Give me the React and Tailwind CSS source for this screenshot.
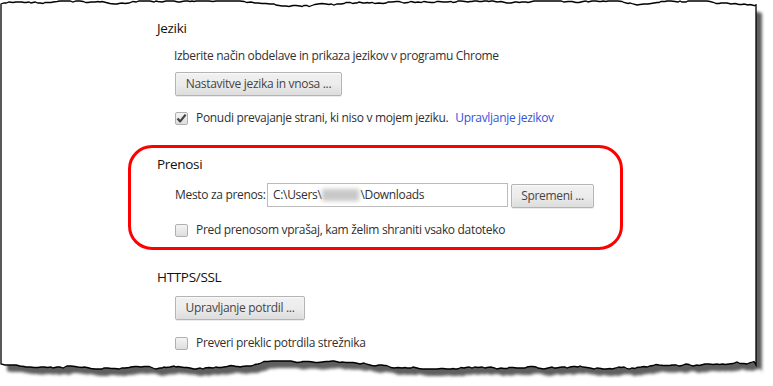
import React from "react";

// deterministic jitter for the torn paper edge
const makeRand = (seed) => {
    let s = seed;
    return () => {
        s = (s * 9301 + 49297) % 233280;
        return s / 233280;
    };
};

const edge = (x0, x1, base, amp, seed) => {
    const rand = makeRand(seed);
    const pts = [];
    let y = base;
    for (let x = x0; x <= x1; x += 2 + Math.floor(rand() * 3)) {
        y += (rand() - 0.5) * 2.2;
        if (y > base + amp) y = base + amp;
        if (y < base - amp) y = base - amp;
        pts.push([x, Math.round(y * 2) / 2]);
    }
    pts.push([x1, base]);
    return pts;
};

const TornPaper = () => {
    const top = edge(1, 756, 4, 3, 7);
    const bottom = edge(1, 756, 365, 4, 23).reverse();
    const d =
        "M" + top.map(([x, y]) => `${x},${y}`).join(" L") +
        " L" + bottom.map(([x, y]) => `${x},${y}`).join(" L") + " Z";
    return (
        <svg className="absolute inset-0" width="773" height="386">
            <defs>
                <filter id="soft" x="-5%" y="-5%" width="110%" height="110%">
                    <feGaussianBlur stdDeviation="1.6" />
                </filter>
            </defs>
            <path d={d} transform="translate(6,7)" fill="#5f5f5f" filter="url(#soft)" />
            <path d={d} fill="#fff" stroke="#000" strokeWidth="1.3" />
        </svg>
    );
};

const Button = ({ children, w }) => (
    <button
        className={`h-[24px] ${w} rounded-[2px] border border-[#b4b4b4] bg-gradient-to-b from-[#f0f0f0] via-[#ececec] to-[#dcdcdc] text-[12px] text-[#444] shadow-[0_1px_0_rgba(0,0,0,0.08),inset_0_1px_2px_rgba(255,255,255,0.75)]`}
    >
        {children}
    </button>
);

const Checkbox = ({ checked }) => (
    <span className="w-[13px] h-[13px] rounded-[2px] border border-[#b0b0b0] bg-gradient-to-b from-[#f4f4f4] to-[#dedede] flex items-center justify-center shrink-0">
        {checked && (
            <svg width="11" height="11" viewBox="0 0 11 11">
                <path d="M1.5 5.5 L4.2 8.4 L9.6 1.6" fill="none" stroke="#444" strokeWidth="2.2" strokeLinejoin="round" />
            </svg>
        )}
    </span>
);

const CheckRow = ({ checked, children, className = "" }) => (
    <div className={`h-[16px] flex items-center gap-[8px] pl-[18px] ${className}`}>
        <Checkbox checked={checked} />
        <span className="text-[12px] text-[#303030]">{children}</span>
    </div>
);

const Heading = ({ children, className = "" }) => (
    <h3 className={`h-[16px] leading-[16px] text-[13.5px] text-[#111] ${className}`}>{children}</h3>
);

export default function App() {
    return (
        <div
            className="relative w-[773px] h-[386px] bg-white overflow-hidden"
            style={{ fontFamily: '"Open Sans", "Noto Sans", sans-serif' }}
        >
            <TornPaper />
            <div className="relative pl-[157px] pt-[20px] tracking-[-0.32px]">
                <Heading>Jeziki</Heading>
                <p className="mt-[12px] h-[16px] leading-[16px] pl-[17px] text-[12px] text-[#303030]">
                    Izberite način obdelave in prikaza jezikov v programu Chrome
                </p>
                <div className="mt-[6px] pl-[18px]">
                    <Button w="w-[167px]">Nastavitve jezika in vnosa ...</Button>
                </div>
                <CheckRow checked className="mt-[14px]">
                    Ponudi prevajanje strani, ki niso v mojem jeziku.
                    <span className="ml-[7px] text-[#3553d6]">Upravljanje jezikov</span>
                </CheckRow>

                <section className="mt-[19px] -ml-[29px] w-[495px] h-[105px] border-[3px] border-[#ff0000] rounded-[24px] pl-[26px] pt-[8px]">
                    <Heading>Prenosi</Heading>
                    <div className="mt-[11px] pl-[18px] flex items-center h-[24px]">
                        <span className="w-[92px] text-[12px] text-[#303030]">Mesto za prenos:</span>
                        <div className="w-[241px] h-[24px] border border-[#bcbcbc] bg-white flex items-center pl-[5px] text-[12px] text-[#303030]">
                            <span>C:\Users\</span>
                            <span className="w-[37px] h-[12px] bg-[#c8c8c8] blur-[2px] mx-[1px]" />
                            <span>\Downloads</span>
                        </div>
                        <div className="ml-[3px]">
                            <Button w="w-[83px]">Spremeni ...</Button>
                        </div>
                    </div>
                    <CheckRow className="mt-[15px]">Pred prenosom vprašaj, kam želim shraniti vsako datoteko</CheckRow>
                </section>

                <Heading className="mt-[19px]">HTTPS/SSL</Heading>
                <div className="mt-[9px] pl-[18px]">
                    <Button w="w-[130px]">Upravljanje potrdil ...</Button>
                </div>
                <CheckRow className="mt-[15px]">Preveri preklic potrdila strežnika</CheckRow>
            </div>
        </div>
    );
}
